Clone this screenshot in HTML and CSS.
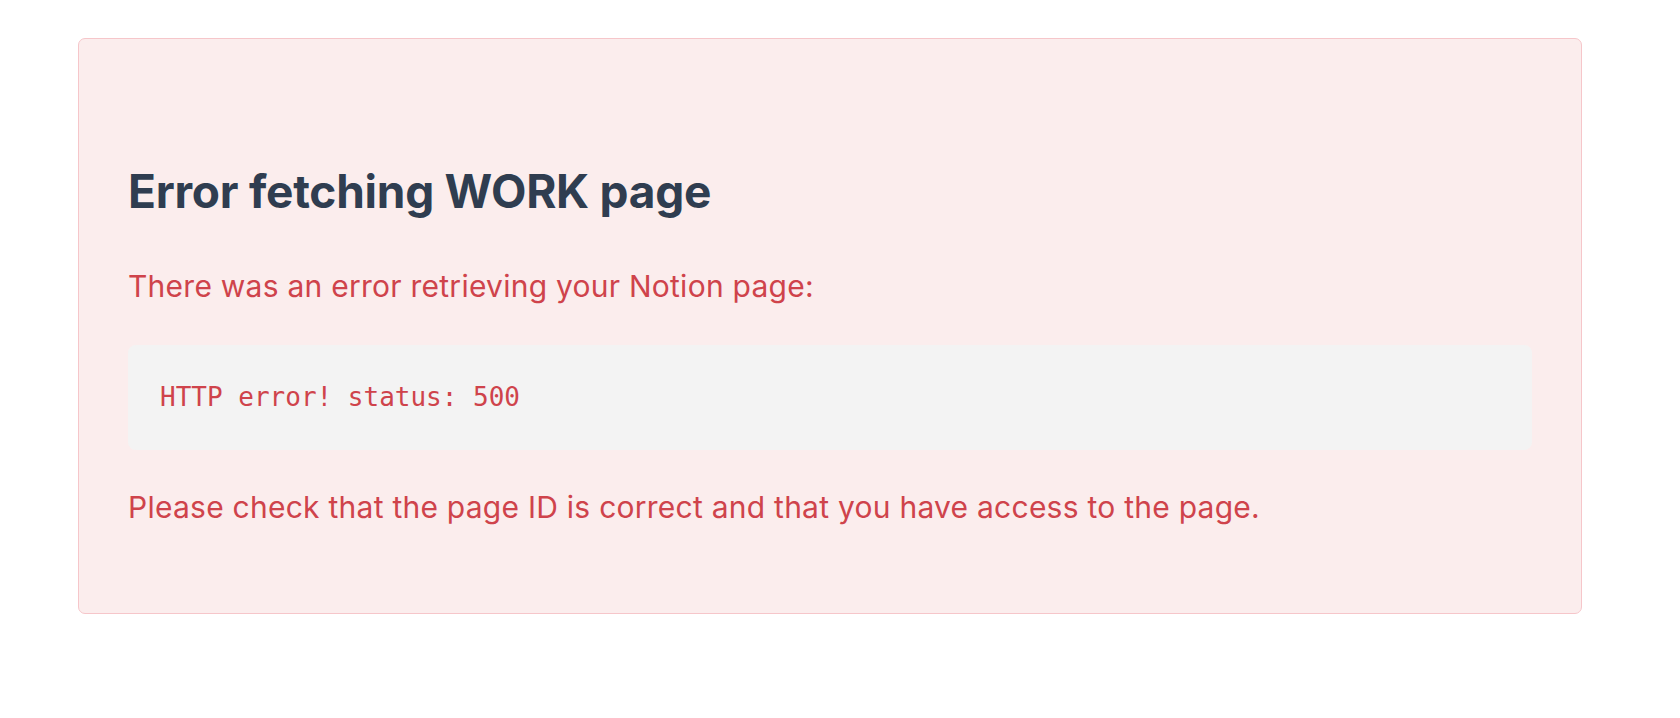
FILE: index.html
```html
<!DOCTYPE html>
<html lang="en">
<head>
<meta charset="utf-8">
<title>Error</title>
<link rel="stylesheet" href="styles.css">
</head>
<body>
<main class="page">
  <section class="error-card">
    <h1 class="error-title">Error fetching WORK page</h1>
    <p class="error-text">There was an error retrieving your Notion page:</p>
    <pre class="error-code">HTTP error! status: 500</pre>
    <p class="error-text error-hint">Please check that the page ID is correct and that you have access to the page.</p>
  </section>
</main>
</body>
</html>
```
FILE: styles.css
```css
html, body {
  margin: 0;
  padding: 0;
  background: #ffffff;
}
body {
  font-family: Inter, "Noto Sans", "Liberation Sans", sans-serif;
}
.page {
  padding: 38px 98px 0 78px;
}
.error-card {
  box-sizing: border-box;
  width: 1504px;
  height: 576px;
  background: #fbeded;
  border: 1px solid #f6c6ca;
  border-radius: 7px;
  padding: 49px;
}
.error-title {
  margin: 75px 0 0 0;
  font-size: 46px;
  line-height: 56px;
  font-weight: 700;
  color: #2f3d50;
  letter-spacing: -0.25px;
}
.error-text {
  margin: 45px 0 0 0;
  font-size: 30px;
  line-height: 45px;
  letter-spacing: 0.25px;
  color: #cf434b;
}
.error-code {
  margin: 36px 0 0 0;
  padding: 32px;
  background: #f3f3f3;
  border-radius: 8px;
  font-family: "DejaVu Sans Mono", "Liberation Mono", monospace;
  font-size: 26px;
  line-height: 41px;
  color: #cf434b;
}
.error-hint {
  margin-top: 35px;
}
```
